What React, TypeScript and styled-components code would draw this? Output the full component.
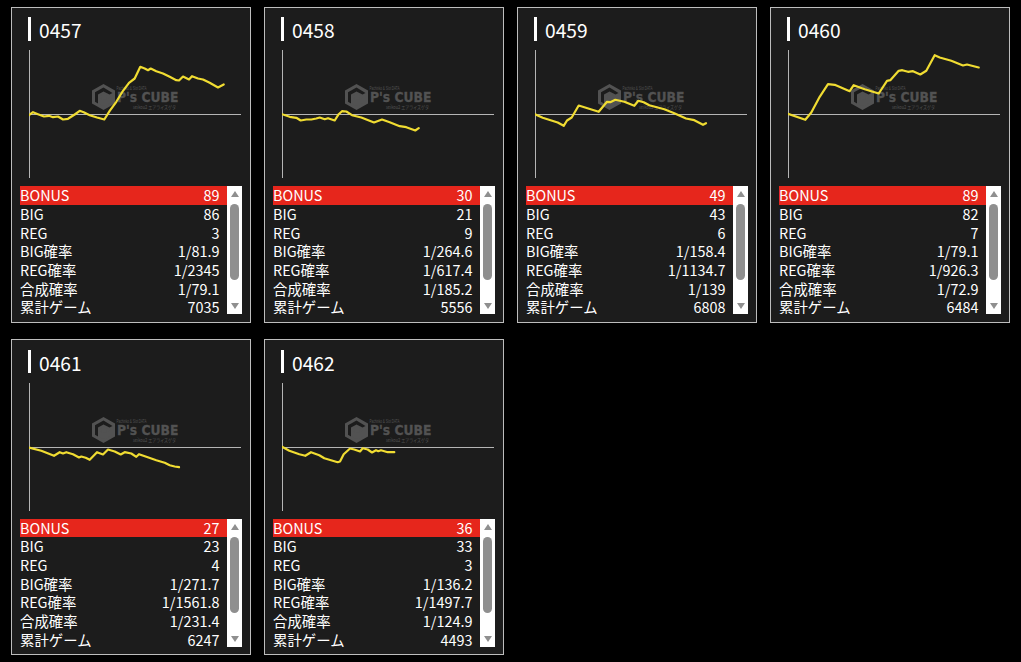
import { FC } from "react";
import styled, { createGlobalStyle } from "styled-components";

type Point = [number, number];

interface MachineType {
	id: string;
	axis: number;
	base: number;
	line: Point[];
	stats: [string, string][];
}

const statRows = (v: string[]): [string, string][] => [
	["BONUS", v[0]],
	["BIG", v[1]],
	["REG", v[2]],
	["BIG確率", v[3]],
	["REG確率", v[4]],
	["合成確率", v[5]],
	["累計ゲーム", v[6]],
];

// line points are read at 3x, axis / base say where the zero lines sit
const machines: MachineType[] = [
	{
		id: "0457",
		axis: 58,
		base: 223,
		line: [[58,225],[70,216],[85,222],[103,229],[118,227],[130,231],[145,229],[160,238],[175,236],[195,223],[210,212],[222,216],[240,225],[262,232],[284,238],[300,212],[320,185],[340,152],[358,128],[375,115],[392,80],[405,85],[415,90],[423,85],[440,93],[460,100],[480,110],[500,120],[508,121],[520,109],[538,118],[547,108],[565,115],[580,118],[600,128],[625,142],[642,133]],
		stats: statRows(["89", "86", "3", "1/81.9", "1/2345", "1/79.1", "7035"]),
	},
	{
		id: "0458",
		axis: 52,
		base: 223,
		line: [[52,222],[75,230],[95,233],[108,241],[125,238],[140,238],[155,235],[165,232],[180,237],[190,234],[210,241],[222,222],[232,213],[245,214],[262,225],[290,232],[328,247],[338,243],[352,238],[375,246],[405,258],[425,261],[452,271],[462,264]],
		stats: statRows(["30", "21", "9", "1/264.6", "1/617.4", "1/185.2", "5556"]),
	},
	{
		id: "0459",
		axis: 52,
		base: 223,
		line: [[52,222],[75,233],[120,247],[138,257],[148,241],[162,232],[183,196],[243,215],[268,185],[278,186],[293,179],[320,185],[350,197],[362,182],[378,186],[395,195],[440,207],[470,219],[505,235],[530,240],[556,254],[565,249]],
		stats: statRows(["49", "43", "6", "1/158.4", "1/1134.7", "1/139", "6808"]),
	},
	{
		id: "0460",
		axis: 55,
		base: 223,
		line: [[55,221],[107,239],[125,217],[150,170],[175,132],[195,134],[240,153],[252,135],[285,147],[327,160],[352,122],[362,120],[387,92],[398,90],[415,95],[430,93],[452,103],[470,92],[495,45],[510,52],[545,62],[580,76],[592,73],[627,82]],
		stats: statRows(["89", "82", "7", "1/79.1", "1/926.3", "1/72.9", "6484"]),
	},
	{
		id: "0461",
		axis: 58,
		base: 142,
		line: [[58,142],[95,152],[133,167],[150,156],[160,160],[170,156],[190,162],[208,172],[215,169],[228,173],[240,179],[262,156],[280,163],[295,148],[315,154],[333,163],[345,156],[365,160],[380,170],[388,162],[410,170],[440,180],[465,188],[480,195],[495,199],[508,201]],
		stats: statRows(["27", "23", "4", "1/271.7", "1/1561.8", "1/231.4", "6247"]),
	},
	{
		id: "0462",
		axis: 818,
		base: 142,
		line: [[818,140],[840,152],[870,162],[888,167],[905,156],[930,165],[945,174],[985,186],[992,184],[1003,162],[1022,145],[1035,148],[1052,154],[1060,144],[1075,148],[1088,157],[1100,150],[1107,153],[1115,150],[1135,156],[1155,156]],
		stats: statRows(["36", "33", "3", "1/136.2", "1/1497.7", "1/124.9", "4493"]),
	},
];

const BASE_Y = 64.5;

const Chart: FC<{ machine: MachineType }> = ({ machine }) => {
	const points = machine.line
		.map(([x, y]) => `${((x - machine.axis) / 3).toFixed(1)},${(BASE_Y + (y - machine.base) / 3).toFixed(1)}`)
		.join(" ");

	return (
		<ChartSvg viewBox='0 0 213 128' width='213' height='128'>
			<g fill='#525252'>
				<path
					fillRule='evenodd'
					d='M74.5 34l11.500 6.500v13l-11.500 6.500-11.500-6.500v-13zM74.500 37.500l-8.500 4.800v9.400l3 1.700v-9l5.500-3 6 3.200 3-1.700z'
				/>
				<path d='M75 43.500l5.500 3-5.500 3-5.500-3zM70 47.500l4.500 2.600v6l-4.500-2.600zM80.500 47.500l-5 2.600v6l5-2.600z' />
				<text x='87.500' y='39.500' fontSize='5' fontFamily='"Liberation Sans", sans-serif' textLength='30' lengthAdjust='spacingAndGlyphs'>
					Pachinko &amp; Slot DATA
				</text>
				<text x='88' y='52.300' fontSize='13.500' fontFamily='"DejaVu Sans", sans-serif' fontWeight='700' stroke='#525252' strokeWidth='0.3' textLength='61.500' lengthAdjust='spacingAndGlyphs'>
					P's CUBE
				</text>
				<text x='104' y='59.300' fontSize='5' fontFamily='"Noto Sans CJK JP", sans-serif' textLength='43' lengthAdjust='spacingAndGlyphs'>
					seikou2 エアライズゲタ
				</text>
			</g>
			<line x1='0.5' y1='0' x2='0.5' y2='128' stroke='#b5b5b5' />
			<line x1='0' y1={BASE_Y} x2='212' y2={BASE_Y} stroke='#b5b5b5' />
			<polyline points={points} fill='none' stroke='#f0dc32' strokeWidth='2.2' strokeLinejoin='round' strokeLinecap='round' />
		</ChartSvg>
	);
};

const Card: FC<{ machine: MachineType }> = ({ machine }) => (
	<StyledCard>
		<Title>{machine.id}</Title>
		<Chart machine={machine} />
		<StatBox>
			<Rows>
				{machine.stats.map(([label, value], i) => (
					<Row key={label} $active={i === 0}>
						<span>{label}</span>
						<span>{value}</span>
					</Row>
				))}
			</Rows>
			<ScrollBar>
				<ArrowUp />
				<Thumb />
				<ArrowDown />
			</ScrollBar>
		</StatBox>
	</StyledCard>
);

const App: FC = () => (
	<>
		<GlobalStyle />
		<Grid>
			{machines.map((m) => (
				<Card key={m.id} machine={m} />
			))}
		</Grid>
	</>
);

const GlobalStyle = createGlobalStyle`
	html, body {
		margin: 0;
		background: #000;
	}
	body {
		font-family: "Noto Sans CJK JP", "Noto Sans", sans-serif;
		color: #fff;
	}
`;

const Grid = styled.div`
	display: grid;
	grid-template-columns: repeat(4, 240px);
	grid-auto-rows: 315.6px;
	column-gap: 13px;
	row-gap: 16.8px;
	padding: 7px 11px;
	height: 662px;
	box-sizing: border-box;
	overflow: hidden;
`;

const StyledCard = styled.div`
	display: flex;
	flex-direction: column;
	box-sizing: border-box;
	padding: 9.2px 8px 0;
	background: #1c1c1c;
	border: 1px solid #bdbdbd;
`;

const Title = styled.div`
	height: 23.7px;
	margin: 0 0 9.3px 8px;
	padding-left: 8px;
	border-left: 3px solid #fff;
	font-size: 19.2px;
	line-height: 27px;
`;

const ChartSvg = styled.svg`
	display: block;
	margin: 0 0 8.1px 9px;
	flex: none;
`;

const StatBox = styled.div`
	display: flex;
	width: 222px;
	height: 128px;
	flex: none;
	overflow: hidden;
`;

const Rows = styled.div`
	flex: 1;
	min-width: 0;
`;

const Row = styled.div<{ $active: boolean }>`
	display: flex;
	justify-content: space-between;
	height: 18.67px;
	padding: 0 7.6px 0 0;
	font-size: 14.4px;
	line-height: 18.4px;
	background: ${(p) => (p.$active ? "#e6261c" : "transparent")};
`;

const ScrollBar = styled.div`
	display: flex;
	flex-direction: column;
	align-items: center;
	width: 15px;
	background: #fff;
`;

const ArrowUp = styled.div`
	width: 0;
	height: 0;
	margin-top: 5px;
	border-left: 4.5px solid transparent;
	border-right: 4.5px solid transparent;
	border-bottom: 6px solid #8f8f8f;
`;

const ArrowDown = styled.div`
	width: 0;
	height: 0;
	margin-top: 23px;
	border-left: 4.5px solid transparent;
	border-right: 4.5px solid transparent;
	border-top: 6px solid #8f8f8f;
`;

const Thumb = styled.div`
	width: 9px;
	height: 76px;
	margin-top: 7px;
	border-radius: 5px;
	background: #8f8f8f;
`;

export default App;
